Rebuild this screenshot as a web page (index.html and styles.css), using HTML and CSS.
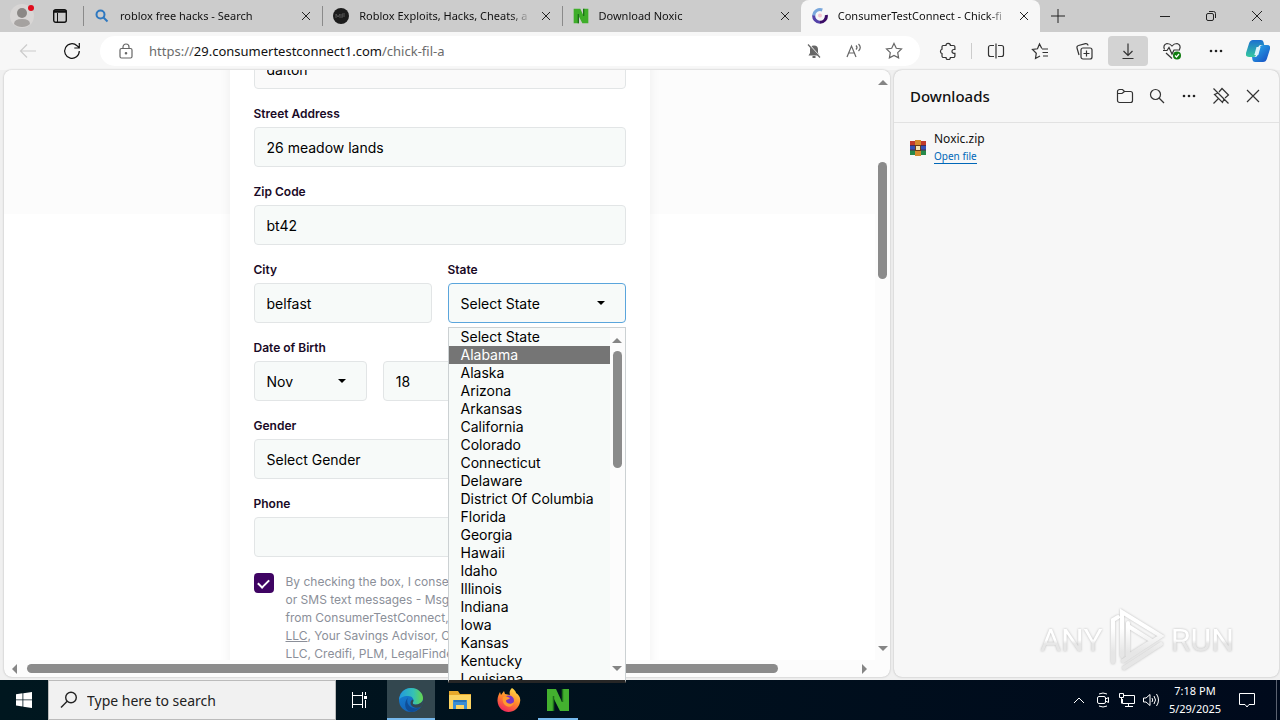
FILE: index.html
```html
<!DOCTYPE html>
<html lang="en">
<head>
  <meta charset="UTF-8">
  <meta name="viewport" content="width=device-width, initial-scale=1">
  <title>ConsumerTestConnect - Chick-fil-a</title>
  <link rel="stylesheet" href="styles.css">
</head>
<body>

<!-- Tab strip -->
<header class="tabbar">
  <button class="profile" aria-label="Profile">
    <svg width="24" height="24" viewBox="0 0 24 24"><circle cx="12" cy="12" r="12" fill="#d8d6d5"/><circle cx="12" cy="9" r="5" fill="#8b8886"/><path d="M4 20q0-5 8-5t8 5q-3 3-8 3t-8-3z" fill="#a5a2a0"/><circle cx="21" cy="4" r="3" fill="#e00b1c"/></svg>
  </button>
  <button class="workspace" aria-label="Tab actions">
    <svg width="16" height="16" viewBox="0 0 16 16"><rect x="1.700" y="1.700" width="12.600" height="12.600" rx="2" fill="none" stroke="#111" stroke-width="1.400"/><path d="M1.500 3.500h13" stroke="#111" stroke-width="2.500"/><path d="M5.500 5v9" stroke="#111"/></svg>
  </button>
  <nav class="tabs">
    <div class="tab">
      <svg width="16" height="16" viewBox="0 0 16 16" fill="none" stroke="#2e78c0" stroke-width="2"><circle cx="6.500" cy="6.500" r="4"/><path d="M9.500 9.500l4 4"/></svg>
      <a href="#" class="tab-title">roblox free hacks - Search</a>
      <button class="tab-close" aria-label="Close tab"><svg width="10" height="10" viewBox="0 0 10 10"><path d="M1 1l8 8M9 1l-8 8"/></svg></button>
    </div>
    <div class="tab">
      <svg width="16" height="16" viewBox="0 0 16 16"><circle cx="8" cy="8" r="8" fill="#1c1c1c"/><path d="M3 10V6l2 3 2-3v4M9 10V6h3M9 8h3" fill="none" stroke="#555"/></svg>
      <a href="#" class="tab-title">Roblox Exploits, Hacks, Cheats, a</a>
      <button class="tab-close" aria-label="Close tab"><svg width="10" height="10" viewBox="0 0 10 10"><path d="M1 1l8 8M9 1l-8 8"/></svg></button>
    </div>
    <div class="tab">
      <svg width="16" height="16" viewBox="0 0 24 24"><path d="M1 1h10l5 11V1h7v22h-9L9 13v10H1z" fill="#3fae2a"/><path d="M8 23V9M16 12V1" fill="none" stroke="#1d6f1a" stroke-width="2"/></svg>
      <a href="#" class="tab-title">Download Noxic</a>
      <button class="tab-close" aria-label="Close tab"><svg width="10" height="10" viewBox="0 0 10 10"><path d="M1 1l8 8M9 1l-8 8"/></svg></button>
    </div>
    <div class="tab active">
      <svg width="16" height="16" viewBox="0 0 16 16" fill="none" stroke-width="3"><path d="M14.300 7A6.300 6.300 0 0 1 8 14.300" stroke="#3a0b66"/><path d="M8 14.300A6.300 6.300 0 0 1 1.800 7" stroke="#5442a8"/><path d="M1.800 7.500a6.300 6.300 0 0 1 8.500-5.500" stroke="#79a7dc"/><circle cx="8" cy="7.500" r="2" fill="#f2c3cf" stroke="none"/></svg>
      <a href="#" class="tab-title">ConsumerTestConnect - Chick-fi</a>
      <button class="tab-close" aria-label="Close tab"><svg width="10" height="10" viewBox="0 0 10 10"><path d="M1 1l8 8M9 1l-8 8"/></svg></button>
    </div>
  </nav>
  <button class="new-tab" aria-label="New tab"><svg width="14" height="14" viewBox="0 0 14 14"><path d="M7 0v14M0 7h14"/></svg></button>
  <div class="window-controls">
    <button aria-label="Minimize"><svg width="10" height="10" viewBox="0 0 10 10"><path d="M0 5.500h10"/></svg></button>
    <button aria-label="Restore"><svg width="10" height="10" viewBox="0 0 10 10"><rect x=".5" y="2.500" width="7" height="7" rx="1.500"/><path d="M3 .5h4.500a2 2 0 0 1 2 2V7"/></svg></button>
    <button aria-label="Close"><svg width="10" height="10" viewBox="0 0 10 10"><path d="M0 0l10 10M10 0L0 10"/></svg></button>
  </div>
</header>

<!-- Address bar -->
<div class="toolbar">
  <button class="tool disabled" aria-label="Back"><svg width="18" height="18" viewBox="0 0 18 18"><path d="M17 9H1.500M8 2.500L1.500 9 8 15.500"/></svg></button>
  <button class="tool" aria-label="Refresh"><svg width="18" height="18" viewBox="0 0 18 18"><path d="M16.300 9A7.300 7.300 0 1 1 14 3.700l2 2M16.300 1v5h-5" stroke="#111"/></svg></button>
  <div class="address">
    <svg class="lock" width="14" height="16" viewBox="0 0 14 16"><rect x="1" y="5.500" width="12" height="9.500" rx="1.500"/><path d="M4 5.500V4a3 3 0 0 1 6 0v1.500"/><circle cx="7" cy="10.300" r=".7"/></svg>
    <a class="url" href="#">https://<b>29.consumertestconnect1.com</b>/chick-fil-a</a>
    <button class="mini" aria-label="Notifications blocked"><svg width="16" height="16" viewBox="0 0 16 16"><path d="M2.500 12.500l1.500-2.500V6.500a4 4 0 0 1 8 0V10l1.500 2.500z" fill="#666" stroke="none"/><path d="M6.500 14h3" stroke-width="2"/><path d="M3 1.500l11 12.500" stroke="#fff" stroke-width="1.500"/><path d="M2 1.500l12 13"/></svg></button>
    <button class="mini" aria-label="Read aloud"><svg width="18" height="16" viewBox="0 0 18 16"><path d="M2 14L6.500 3 11 14M3.700 10h5.700M11 2.500q2 2 0 4M13.500 1q3.500 3.500 0 7"/></svg></button>
    <button class="mini" aria-label="Favorite"><svg width="18" height="18" viewBox="0 0 18 18"><path d="M9 1.500l2.300 4.800 5.200.7-3.800 3.600.9 5.300L9 13.400l-4.600 2.500.9-5.300L1.500 7l5.200-.7z"/></svg></button>
  </div>
  <button class="tool ext" aria-label="Extensions"><svg width="18" height="18" viewBox="0 0 18 18"><path d="M4 3.500h3a2.200 2.200 0 0 1 4.400 0h3a1.500 1.500 0 0 1 1.500 1.500v2.500h-1a1.800 1.800 0 0 0 0 3.800h1V14a1.500 1.500 0 0 1-1.500 1.500h-3a2.200 2.200 0 0 1-4.400 0H4.500A1.500 1.500 0 0 1 3 14v-2.500a2.200 2.200 0 0 1 0-4.200V5a1.500 1.500 0 0 1 1-1.500z"/></svg></button>
  <span class="divider"></span>
  <button class="tool" aria-label="Split screen"><svg width="18" height="18" viewBox="0 0 18 18"><path d="M7 3.500H3.500a2 2 0 0 0-2 2v7a2 2 0 0 0 2 2H7M11 3.500h3.500a2 2 0 0 1 2 2v7a2 2 0 0 1-2 2H11M9 1.500v15"/></svg></button>
  <button class="tool" aria-label="Favorites"><svg width="18" height="18" viewBox="0 0 18 18"><path d="M11 7h6M11.500 10.500H17M12 14h5M9 14l-4.500 2.500.8-5.300L1.500 7.500l5-.7L8.500 2l2.300 4.500"/></svg></button>
  <button class="tool" aria-label="Collections"><svg width="18" height="18" viewBox="0 0 18 18"><rect x="6" y="6" width="11" height="11" rx="2"/><path d="M11.500 8.500v6M8.500 11.500h6M4 13l-2-7a2 2 0 0 1 1.500-2.500l7-1.800A2 2 0 0 1 13 3.500"/></svg></button>
  <button class="tool pressed" aria-label="Downloads"><svg width="18" height="18" viewBox="0 0 18 18"><path d="M9 1.500v12M4.500 9L9 13.500 13.500 9M3.500 16.500h11"/></svg></button>
  <button class="tool" aria-label="Browser essentials"><svg width="20" height="18" viewBox="0 0 20 18"><path d="M2.500 7.500q-2-4.500 2.500-6 3 0 5 2.500Q12 1.500 15 1.500q4.500 1.500 2.500 6M4 11l6 5.500M1 8.500h4l2-3 3 6.500 2-4h6"/><circle cx="15" cy="13.500" r="4" fill="#107c10" stroke="none"/><path d="M13 13.500l1.500 1.500 2.500-3" stroke="#fff"/></svg></button>
  <button class="tool" aria-label="Settings and more"><svg width="14" height="4" viewBox="0 0 14 4"><g fill="#222" stroke="none"><circle cx="2" cy="2" r="1.300"/><circle cx="7" cy="2" r="1.300"/><circle cx="12" cy="2" r="1.300"/></g></svg></button>
  <button class="tool copilot" aria-label="Copilot"><svg width="24" height="24" viewBox="0 0 24 24"><defs><linearGradient id="cp1" x2="0" y2="1"><stop stop-color="#1b6fd0"/><stop offset="1" stop-color="#35c9a0"/></linearGradient><linearGradient id="cp2" x2="1" y2="1"><stop stop-color="#2bb7ee"/><stop offset="1" stop-color="#1648c0"/></linearGradient></defs><g stroke="none"><path d="M7 1h8q2 0 2.500 2l.7 3H15q-2 0-2.700 2l-2.500 8.500Q9.300 18 7 18H3q-4 0-3-4l3-9.500Q4 1 7 1z" fill="url(#cp1)"/><path d="M17 23H9q-2 0-2.500-2L6 18h3q2 0 2.700-2l2.500-8.500Q14.700 6 17 6h4q4 0 3 4l-3 9.500Q20 23 17 23z" fill="url(#cp2)"/><path d="M10.500 8h4l-2.200 8h-4z" fill="#d9f3fb"/></g></svg></button>
</div>

<main class="content">
  <section class="webview">
    <div class="viewport">
      <form class="card">
        <div class="field"><input class="plain" type="text" value="dalton" aria-label="Last Name"></div>
        <div class="field">
          <label for="street">Street Address</label>
          <input id="street" type="text" value="26 meadow lands">
        </div>
        <div class="field">
          <label for="zip">Zip Code</label>
          <input id="zip" type="text" value="bt42">
        </div>
        <div class="row">
          <div class="field">
            <label for="city">City</label>
            <input id="city" type="text" value="belfast">
          </div>
          <div class="field">
            <label for="state">State</label>
            <div class="select focused"><select id="state"><option>Select State</option></select></div>
            <div class="popup">
              <ul role="listbox" aria-label="State">
                <li role="option">Select State</li>
                <li role="option" class="hover">Alabama</li>
                <li role="option">Alaska</li>
                <li role="option">Arizona</li>
                <li role="option">Arkansas</li>
                <li role="option">California</li>
                <li role="option">Colorado</li>
                <li role="option">Connecticut</li>
                <li role="option">Delaware</li>
                <li role="option">District Of Columbia</li>
                <li role="option">Florida</li>
                <li role="option">Georgia</li>
                <li role="option">Hawaii</li>
                <li role="option">Idaho</li>
                <li role="option">Illinois</li>
                <li role="option">Indiana</li>
                <li role="option">Iowa</li>
                <li role="option">Kansas</li>
                <li role="option">Kentucky</li>
                <li role="option">Louisiana</li>
              </ul>
              <div class="vscroll"><i class="arrow up"></i><span class="thumb"></span><i class="arrow down"></i></div>
            </div>
          </div>
        </div>
        <div class="field">
          <label for="month">Date of Birth</label>
          <div class="row">
            <div class="select"><select id="month"><option>Nov</option></select></div>
            <div class="select"><select aria-label="Day"><option>18</option></select></div>
            <div class="select"><select aria-label="Year"><option></option></select></div>
          </div>
        </div>
        <div class="field">
          <label for="gender">Gender</label>
          <div class="select"><select id="gender"><option>Select Gender</option></select></div>
        </div>
        <div class="field">
          <label for="phone">Phone</label>
          <input id="phone" type="tel">
        </div>
        <div class="consent">
          <input id="agree" type="checkbox" checked>
          <label for="agree">By checking the box, I conse<br>or SMS text messages - Msg<br>from ConsumerTestConnect,<br><a href="#">LLC</a>, Your Savings Advisor, C<br>LLC, Credifi, PLM, LegalFinde</label>
        </div>
      </form>
    </div>
    <div class="vscroll page-v"><i class="arrow up"></i><span class="thumb"></span><i class="arrow down"></i></div>
    <div class="hscroll"><i class="arrow left"></i><div class="track"><span class="thumb"></span></div><i class="arrow right"></i></div>
  </section>

  <aside class="downloads">
    <div class="downloads-head">
      <h2>Downloads</h2>
      <button aria-label="Open downloads folder"><svg width="18" height="16" viewBox="0 0 18 16"><path d="M1.500 12.500v-9a2 2 0 0 1 2-2h3l2 2h6a2 2 0 0 1 2 2v7a2 2 0 0 1-2 2h-11a2 2 0 0 1-2-2zM1.500 5.500h4.500l2.500-2"/></svg></button>
      <button aria-label="Search downloads"><svg width="16" height="16" viewBox="0 0 16 16"><circle cx="6.500" cy="6.500" r="5"/><path d="M10 10l5 5"/></svg></button>
      <button aria-label="More options"><svg width="14" height="4" viewBox="0 0 14 4"><g fill="#222" stroke="none"><circle cx="2" cy="2" r="1.300"/><circle cx="7" cy="2" r="1.300"/><circle cx="12" cy="2" r="1.300"/></g></svg></button>
      <button aria-label="Unpin"><svg width="18" height="18" viewBox="0 0 18 18"><path d="M1.500 1.500l15 15M7 5l3-3.500 6.500 6.500-3.500 3M6 6l-3.500 1.500 8 8L12 12M6.500 11.500l-5 5"/></svg></button>
      <button aria-label="Close downloads"><svg width="14" height="14" viewBox="0 0 14 14"><path d="M1 1l12 12M13 1L1 13"/></svg></button>
    </div>
    <div class="download">
      <svg width="16" height="16" viewBox="0 0 16 16"><path d="M0 1h16v5H0z" fill="#c13a2b"/><path d="M0 6h16v4H0z" fill="#3551b5"/><path d="M0 10h16v5H0z" fill="#27894a"/><path d="M5 0h6v16H5z" fill="#d58b2c"/><rect x="5.500" y="5.500" width="5" height="5" fill="#f5e4b3" stroke="#6a3d16"/><path d="M0 5.500h5M11 5.500h5M0 10h5M11 10h5" stroke="#4a2b52"/></svg>
      <div>
        <p>Noxic.zip</p>
        <a href="#">Open file</a>
      </div>
    </div>
  </aside>
</main>

<!-- Windows taskbar -->
<footer class="taskbar">
  <button class="task start" aria-label="Start"><svg width="16" height="16" viewBox="0 0 16 16" fill="#fff"><path d="M0 2.200l6.500-.9v6.200H0zM7.300 1.200L16 0v7.500H7.300zM0 8.300h6.500v6.200L0 13.600zM7.300 8.300H16V16l-8.700-1.200z"/></svg></button>
  <label class="search">
    <svg width="18" height="18" viewBox="0 0 18 18" fill="none" stroke="#222" stroke-width="1.400"><circle cx="11" cy="6.500" r="5.300"/><path d="M7.200 10.300L1 16.500"/></svg>
    <input type="text" placeholder="Type here to search" aria-label="Search">
  </label>
  <button class="task view" aria-label="Task view"><svg width="18" height="18" viewBox="0 0 18 18" fill="none" stroke="#fff"><path d="M1.500 1v3.500h10V1M1.500 17v-3.500h10V17M14.500 1v3M14.500 9v8"/><rect x="1.500" y="4.500" width="10" height="9"/><path d="M13 6.500h3" stroke-width="3"/></svg></button>
  <button class="task running current" aria-label="Microsoft Edge"><svg width="24" height="24" viewBox="0 0 24 24"><defs><linearGradient id="e1" x2="1"><stop stop-color="#2198df"/><stop offset=".6" stop-color="#35c1b5"/><stop offset="1" stop-color="#66d64b"/></linearGradient><linearGradient id="e2" x2=".4" y2="1"><stop stop-color="#1584d8"/><stop offset="1" stop-color="#1464b8"/></linearGradient></defs><circle cx="12" cy="12" r="12" fill="url(#e2)"/><path d="M0 12C1 4 6 0 12 0c7 0 12 5 12 10 0 4-3 6.500-7 6.500-3 0-4-1-3-2.500 1.500-3-1-6-5-6-5 0-8 2-9 4z" fill="url(#e1)"/><path d="M9 9.500c-2 4 0 9 5 10.500 3 1 6 0 7.500-1.500C19 22.500 15 24 12 24c-6-1-8-9-3-14.500z" fill="#0f4e98"/><path d="M14 14c-1 2 1 3 4 2.500 2-.3 4-1.500 6-4 0 2-.5 5-2.500 6.500-4 2-10 0-10-4 0-2 1-3 2.500-3.500.7 1 .5 1.700 0 2.500z" fill="#34474f"/></svg></button>
  <button class="task" aria-label="File Explorer"><svg width="22" height="20" viewBox="0 0 22 20"><path d="M0 1h9l2 3h11v15H0z" fill="#e8a92b"/><path d="M0 5h22v14H0z" fill="#fcd462"/><path d="M4 10h14v9h-3v-4H7v4H4z" fill="#3a8ed4"/><path d="M5 10h12v2H5z" fill="#2673b8"/></svg></button>
  <button class="task" aria-label="Firefox"><svg width="24" height="24" viewBox="0 0 24 24"><defs><linearGradient id="f1" x1=".8" x2=".3" y2="1"><stop stop-color="#ffe14a"/><stop offset=".5" stop-color="#ff8a2a"/><stop offset="1" stop-color="#f0245e"/></linearGradient></defs><path d="M15 0c3 2 4 4 4 5 3 2 5 5 4 9-1 6-6 10-11.500 10S1 20 .5 13C.3 9 2 6 3 4l1 3 3-4 1 3 5 1c-1-3 0-5 2-7z" fill="url(#f1)"/><circle cx="12" cy="12.500" r="5" fill="#7a35c4"/><path d="M6 9c3-1 5 0 7 1-1 2-4 1-4 3 1 3 5 4 8 1-1 5-6 6-9 3-2-2-3-5-2-8z" fill="#ff9a2e"/></svg></button>
  <button class="task running" aria-label="Noxic"><svg width="24" height="24" viewBox="0 0 24 24"><path d="M1 1h9l6 13V1h7v22h-9L8 11v12H1z" fill="#43b02f"/><path d="M7.500 23V8M16.500 14V1" fill="none" stroke="#1d6f1a" stroke-width="1.500"/></svg></button>
  <div class="tray">
    <button aria-label="Show hidden icons"><svg width="12" height="8" viewBox="0 0 12 8"><path d="M1 7l5-5 5 5"/></svg></button>
    <button aria-label="Meet now"><svg width="14" height="16" viewBox="0 0 14 16"><rect x="1.500" y="4.500" width="8" height="7" rx="1.500"/><path d="M9.500 7l3-1.500v5l-3-1.500M3 2q4-2 8 0M3 14q4 2 8 0"/></svg></button>
    <button aria-label="Network"><svg width="18" height="16" viewBox="0 0 18 16"><path d="M6 3.500h10.500v8H4.500V7M7 14.500h8M10.500 11.500v3M1.500 1.500h4v4h-4zM3.500 5.500v6"/></svg></button>
    <button aria-label="Volume"><svg width="18" height="16" viewBox="0 0 18 16"><path d="M1.500 6v4h2.500l4 3.500v-11L4 6zM10 6q1.500 2 0 4M12 4q3 4 0 8M14.500 2q4 6 0 12"/></svg></button>
    <div class="clock"><span>7:18 PM</span><span>5/29/2025</span></div>
    <button class="notify" aria-label="Notifications"><svg width="18" height="18" viewBox="0 0 18 18"><path d="M1.500 2.500h15v11H11L9 16l-2-2.500H1.500z"/></svg></button>
    <span class="show-desktop"></span>
  </div>
</footer>

<div class="watermark">
  <span>ANY</span>
  <svg width="56" height="64" viewBox="0 0 56 64" fill="none" stroke-width="4" stroke-linecap="round"><defs><linearGradient id="wm" gradientUnits="userSpaceOnUse" x1="0" x2="0" y1="20" y2="44"><stop stop-color="#fff"/><stop offset="1" stop-color="#e6e6e6"/></linearGradient></defs><path d="M4 54V12l5-3M13 48V4l39 24L14 53M19 15v33l24-15L19 18M15 60l37-24" stroke="url(#wm)"/></svg>
  <span>RUN</span>
</div>

</body>
</html>
```
FILE: styles.css
```css
* { box-sizing: border-box; }

body {
  margin: 0;
  height: 100vh;
  display: flex;
  flex-direction: column;
  overflow: hidden;
  background: #f0f0f0;
  color: #111;
  font-family: "Noto Sans", sans-serif;
  font-size: 12px;
}

button {
  display: flex;
  align-items: center;
  justify-content: center;
  flex: none;
  padding: 0;
  border: none;
  background: none;
}

a { color: inherit; text-decoration: none; }

/* tabs */
.tabbar {
  display: flex;
  align-items: stretch;
  height: 32px;
  flex: none;
  background: #cccccc;
}

.tabbar button svg { fill: none; stroke: #222; }
.profile { width: 44px; }
.tabbar .profile svg { stroke: none; overflow: visible; }
.workspace { width: 32px; margin-right: 7px; }

.tabs { display: flex; flex: 0 1 957px; min-width: 0; }

.tab {
  display: flex;
  align-items: center;
  gap: 10px;
  flex: 1 1 0;
  min-width: 0;
  padding: 0 11px;
  position: relative;
}

.tab::before {
  content: "";
  position: absolute;
  left: 0;
  top: 6px;
  height: 20px;
  border-left: 1px solid #8a8a8a;
}

.tab.active { background: #f7f7f7; border-radius: 8px 8px 0 0; }
.tab.active::before { display: none; }
.tab > svg { flex: none; }

.tab-title {
  flex: 1;
  min-width: 0;
  overflow: hidden;
  white-space: nowrap;
  font-size: 11px;
  line-height: 16px;
  mask-image: linear-gradient(to right, #000 88%, transparent);
}

.tab-close { width: 10px; }
.new-tab { width: 36px; }
.window-controls { display: flex; margin-left: auto; }
.window-controls button { width: 46px; }

/* toolbar */
.toolbar {
  display: flex;
  align-items: center;
  height: 38px;
  flex: none;
  padding: 0 2px 0 6px;
  background: #f7f7f7;
}

.toolbar svg { fill: none; stroke: #333; stroke-width: 1.2; }
.tool { width: 40px; height: 30px; margin: 0 2px; border-radius: 4px; }
.disabled svg { stroke: #ccc; }
.pressed { background: #d3d3d3; }
.ext { margin: 0 0 0 8px; }
.copilot { width: 36px; }
.divider { width: 1px; height: 16px; margin: 0 2px 0 3px; background: #ccc; }

.address {
  display: flex;
  align-items: center;
  flex: 1;
  min-width: 0;
  height: 30px;
  margin-left: 6px;
  padding: 0 6px 0 19px;
  border-radius: 15px;
  background: #fff;
}

.address svg { stroke: #666; flex: none; }

.url {
  flex: 1;
  min-width: 0;
  margin-left: 16px;
  overflow: hidden;
  white-space: nowrap;
  font-size: 13px;
  line-height: 20px;
  color: #6b6b6b;
}

.url b { font-weight: 400; color: #111; }
.mini { width: 40px; height: 30px; }

/* content */
.content {
  display: flex;
  flex: 1;
  min-height: 0;
  gap: 4px;
  padding: 0 1px 3px 4px;
}

.webview {
  display: grid;
  grid-template-columns: minmax(0, 1fr) 15px;
  grid-template-rows: minmax(0, 1fr) 17px;
  flex: 1;
  min-width: 0;
  overflow: hidden;
  border-radius: 8px;
  background: #fcfcfc;
  box-shadow: 0 0 2px #aaa;
}

.viewport {
  overflow: hidden;
  background: linear-gradient(#fcfcfc 144px, #fff 144px);
}

.card {
  display: flex;
  flex-direction: column;
  gap: 16px;
  width: 420px;
  margin: -45px auto 0;
  padding: 24px;
  background: #fff;
  box-shadow: 0 0 12px rgba(0, 0, 0, 0.06);
  font-family: Inter, sans-serif;
}

.row { display: flex; gap: 16px; }
.row > * { flex: 1; min-width: 0; }
.field { display: flex; flex-direction: column; gap: 4px; }

.field label {
  font-size: 12px;
  font-weight: 600;
  line-height: 18px;
  color: #1a0a26;
}

.field input, .field select {
  display: block;
  width: 100%;
  height: 40px;
  margin: 0;
  padding: 0 12px;
  border: 1px solid #e2e5e6;
  border-radius: 4px;
  outline: none;
  background: #f7faf9;
  color: #000;
  font-family: Inter, sans-serif;
  font-size: 14px;
  appearance: none;
}

.field .plain { background: #fafafa; }
.select { position: relative; }

.select::after {
  content: "";
  position: absolute;
  right: 21px;
  top: 18px;
  border: 4px solid transparent;
  border-top-color: #000;
  border-bottom: none;
}

.field .focused select { border-color: #5aa5dc; }

/* fixed, so that the list is not cut by the page it belongs to */
.popup {
  position: fixed;
  z-index: 5;
  display: flex;
  width: 178px;
  height: 356px;
  margin-top: 66px;
  border: 1px solid #ccd1d3;
  border-bottom: 3px solid #262626;
  background: #f7faf9;
}

.popup ul {
  flex: 1;
  height: 352px;
  margin: 0;
  padding: 0;
  overflow: hidden;
  list-style: none;
}

.popup li {
  padding-left: 12px;
  font-size: 14px;
  line-height: 18px;
  color: #000;
}

.popup .hover { background: #757575; color: #fff; }

.consent { display: flex; gap: 12px; }

.consent input {
  flex: none;
  display: flex;
  justify-content: center;
  width: 20px;
  height: 20px;
  margin: 0;
  border-radius: 4px;
  background: #3f0463;
  appearance: none;
}

.consent input:checked::before {
  content: "";
  width: 5px;
  height: 9px;
  margin-top: 4px;
  border: solid #fff;
  border-width: 0 2px 2px 0;
  transform: rotate(45deg);
}

.consent label {
  font-size: 12px;
  line-height: 18px;
  white-space: nowrap;
  color: #8b8f99;
}

.consent a { text-decoration: underline; }

/* scrollbars */
.vscroll {
  display: flex;
  flex-direction: column;
  align-items: center;
  justify-content: space-between;
  width: 15px;
  padding: 10px 0 9px;
  background: #fcfcfc;
}

.thumb { display: block; background: #8b8b8b; border-radius: 5px; }
.vscroll .thumb { width: 9px; height: 117px; margin-bottom: auto; }
.popup .thumb { margin-top: 8px; }
.page-v .thumb { margin-top: 77px; }

.hscroll {
  display: flex;
  align-items: center;
  grid-column: 1;
  padding: 0 8px;
}

.hscroll .track { flex: 1; margin: 0 10px; }
.hscroll .thumb { width: 91%; height: 9px; }

.arrow { border: 5px solid transparent; flex: none; }
.arrow.up { border-bottom-color: #858585; border-top: none; }
.arrow.down { border-top-color: #858585; border-bottom: none; }
.arrow.left { border-right-color: #858585; border-left: none; }
.arrow.right { border-left-color: #858585; border-right: none; }

/* downloads */
.downloads {
  width: 385px;
  flex: none;
  border-radius: 8px;
  background: #f7f7f7;
  box-shadow: 0 0 2px #aaa;
}

.downloads-head {
  display: flex;
  align-items: center;
  height: 53px;
  padding: 0 10px 0 16px;
  border-bottom: 1px solid #e2e2e2;
}

.downloads-head h2 {
  flex: 1;
  margin: 0;
  font-size: 15px;
  font-weight: 500;
  line-height: 20px;
}

.downloads-head button { width: 32px; height: 32px; }
.downloads-head svg { fill: none; stroke: #333; stroke-width: 1.2; }

.download {
  display: flex;
  align-items: center;
  gap: 8px;
  padding: 8px 16px;
}

.download p { margin: 0; font-size: 12px; line-height: 16px; }

.download a {
  display: inline-block;
  border-bottom: 1px solid #0067b8;
  color: #0067b8;
  font-size: 10px;
  line-height: 14px;
}

/* taskbar */
.taskbar {
  display: flex;
  height: 40px;
  flex: none;
  background: linear-gradient(to right, #00171f, #000a1c);
  color: #fff;
}

.task { width: 48px; margin-right: 1px; }
.task.start { margin: 0; }
.task.view { margin-right: 3px; }
.running { background: linear-gradient(#76b9ed, #76b9ed) bottom / 40px 2px no-repeat; }
.current { background-color: #33474f; background-size: 100% 2px; }

.search {
  display: flex;
  align-items: center;
  gap: 9px;
  width: 288px;
  padding-left: 11px;
  border: 1px solid #bbb;
  background: #f1f1f1;
}

.search input {
  flex: 1;
  min-width: 0;
  padding: 0;
  border: none;
  outline: none;
  background: none;
  font-family: "Noto Sans", sans-serif;
  font-size: 14px;
}

.search input::placeholder { color: #222; opacity: 1; }

.tray { display: flex; align-items: center; margin-left: auto; }
.tray button { width: 24px; height: 40px; }
.tray svg { fill: none; stroke: #fff; }

.clock {
  display: flex;
  flex-direction: column;
  align-items: center;
  width: 64px;
  font-size: 11px;
  line-height: 18px;
}

.tray .notify { width: 40px; }
.show-desktop { width: 4px; height: 40px; margin-left: 9px; border-left: 1px solid #5b6270; }

.watermark {
  position: absolute;
  right: 46px;
  bottom: 48px;
  display: flex;
  align-items: center;
  gap: 6px;
  font-family: Roboto, sans-serif;
  font-size: 32px;
  filter: drop-shadow(0 0 1px #bbb);
  pointer-events: none;
}

.watermark span {
  background: linear-gradient(#fff 50%, #e6e6e6 60%);
  background-clip: text;
  color: transparent;
}
```
